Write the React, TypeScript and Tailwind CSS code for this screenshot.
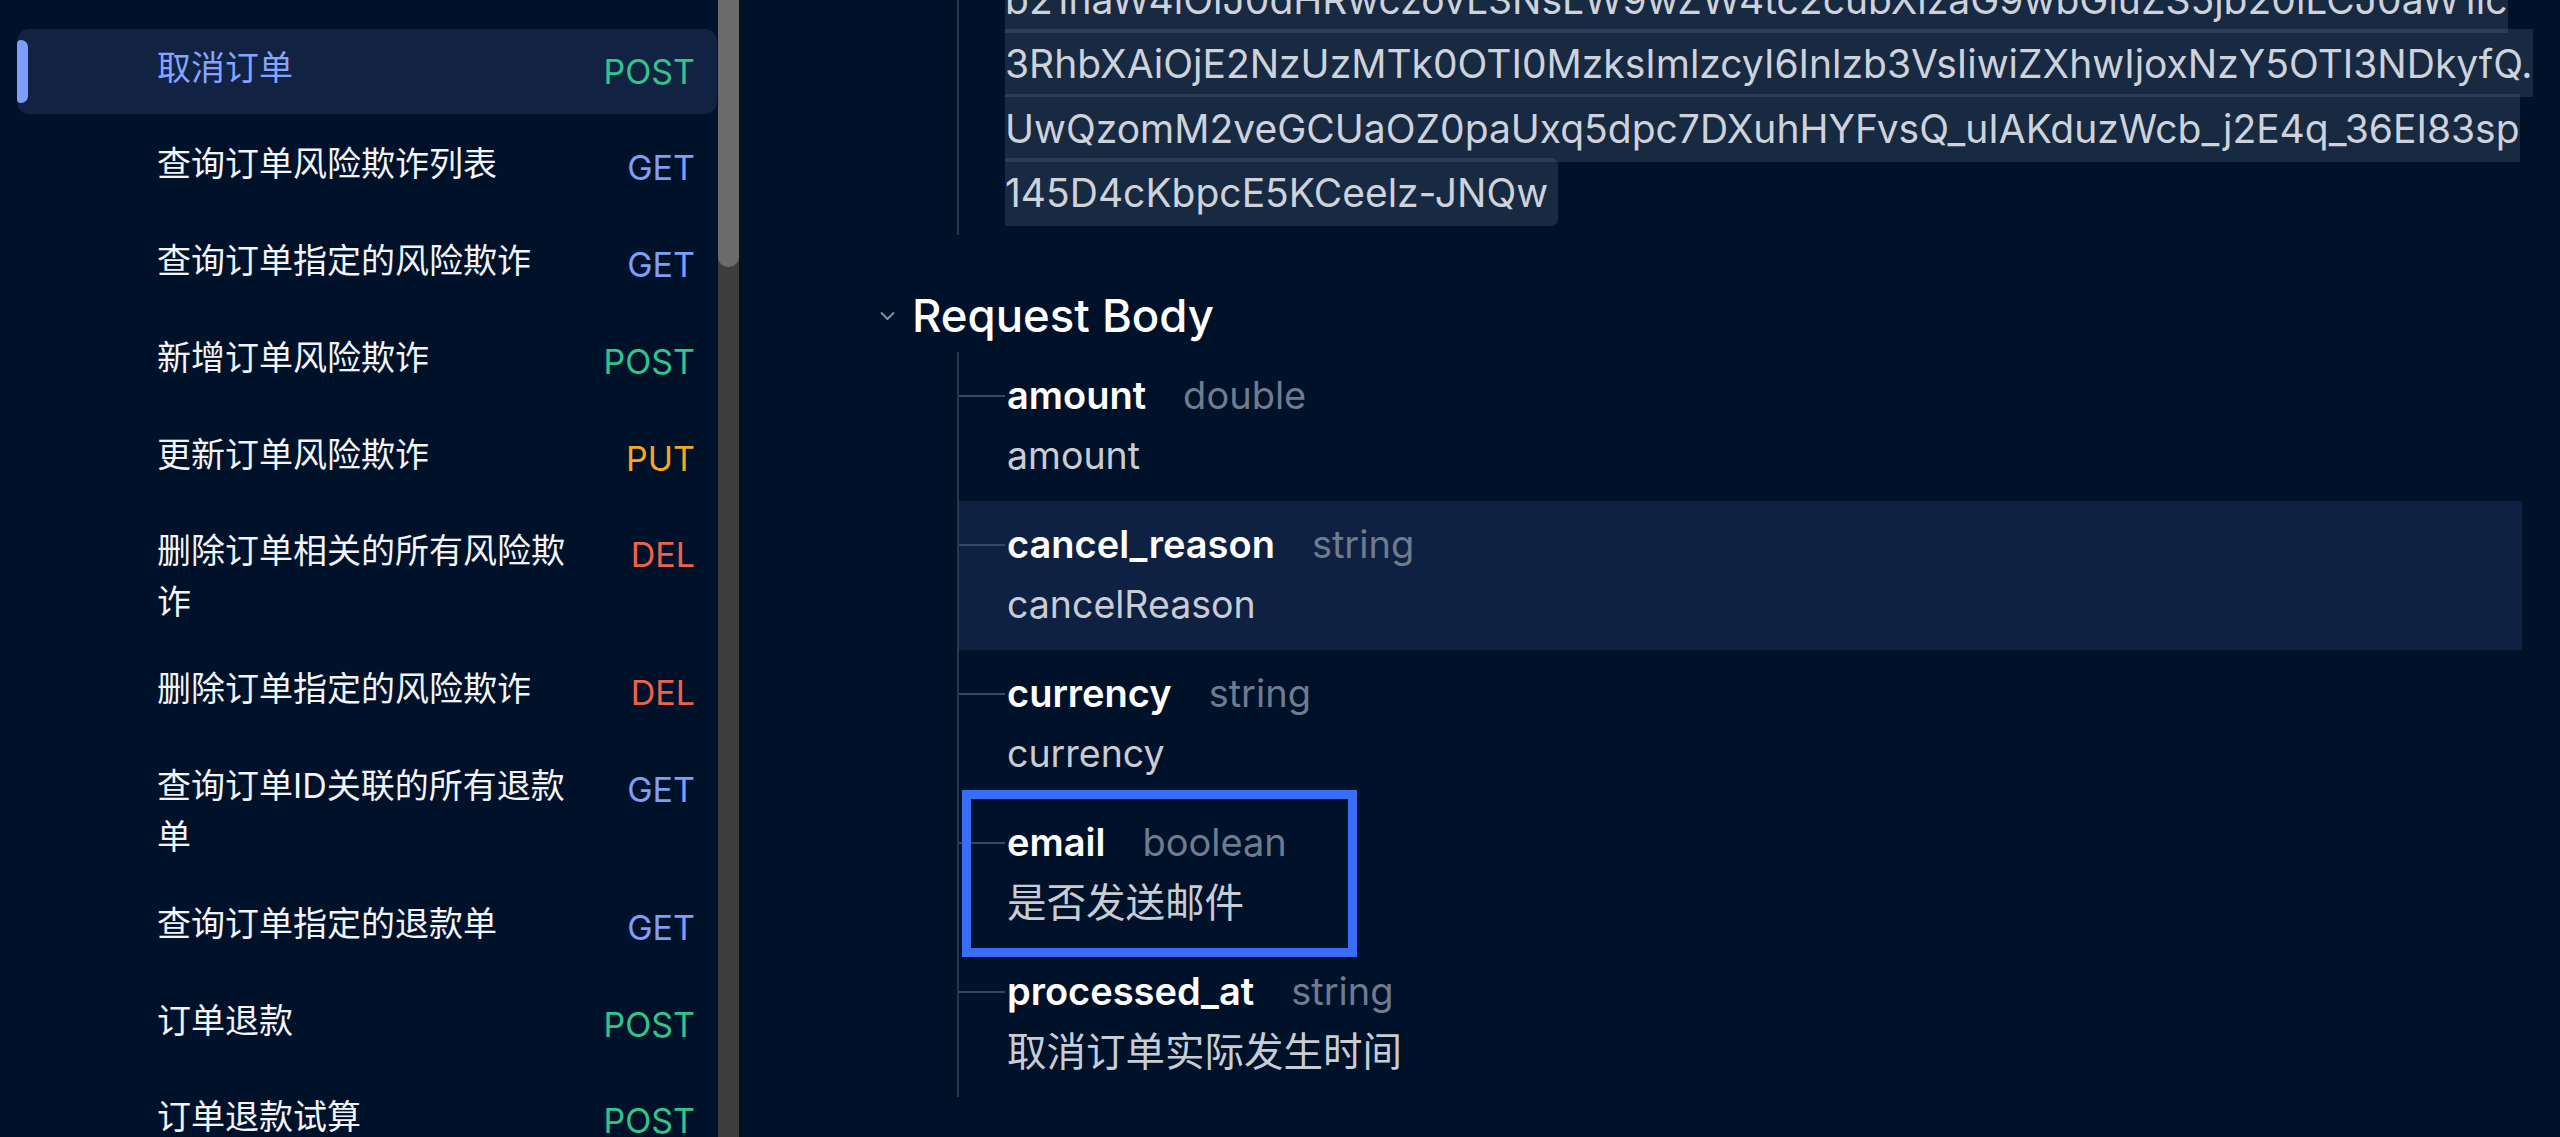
import React from 'react';

type Method = 'POST' | 'GET' | 'PUT' | 'DEL';

const items: { t: string; m: Method; active?: boolean }[] = [
  { t: '取消订单', m: 'POST', active: true },
  { t: '查询订单风险欺诈列表', m: 'GET' },
  { t: '查询订单指定的风险欺诈', m: 'GET' },
  { t: '新增订单风险欺诈', m: 'POST' },
  { t: '更新订单风险欺诈', m: 'PUT' },
  { t: '删除订单相关的所有风险欺诈', m: 'DEL' },
  { t: '删除订单指定的风险欺诈', m: 'DEL' },
  { t: '查询订单ID关联的所有退款单', m: 'GET' },
  { t: '查询订单指定的退款单', m: 'GET' },
  { t: '订单退款', m: 'POST' },
  { t: '订单退款试算', m: 'POST' },
];

const methodColor: Record<Method, string> = {
  POST: 'text-[#31c48d]',
  GET: 'text-[#7f9ef8]',
  PUT: 'text-[#f5a623]',
  DEL: 'text-[#f0614b]',
};

const tokenLines = [
  'b21haW4iOiJ0dHRwczovL3NsLW9wZW4tc2cubXlzaG9wbGluZS5jb20iLCJ0aW1lc',
  '3RhbXAiOjE2NzUzMTk0OTI0MzksImlzcyI6Inlzb3VsIiwiZXhwIjoxNzY5OTI3NDkyfQ.',
  'UwQzomM2veGCUaOZ0paUxq5dpc7DXuhHYFvsQ_uIAKduzWcb_j2E4q_36EI83sp',
  '145D4cKbpcE5KCeelz-JNQw',
];

const fields: { name: string; type: string; desc: string; cjk?: boolean; hl?: boolean; boxed?: boolean }[] = [
  { name: 'amount', type: 'double', desc: 'amount' },
  { name: 'cancel_reason', type: 'string', desc: 'cancelReason', hl: true },
  { name: 'currency', type: 'string', desc: 'currency' },
  { name: 'email', type: 'boolean', desc: '是否发送邮件', cjk: true, boxed: true },
  { name: 'processed_at', type: 'string', desc: '取消订单实际发生时间', cjk: true },
];

export default function App() {
  return (
    <div
      className="flex h-[1137px] w-[2560px] overflow-hidden bg-[#00112a] text-white"
      style={{ fontFamily: 'Inter, "Noto Sans CJK SC", sans-serif' }}
    >
      {/* Sidebar */}
      <aside className="flex w-[718px] shrink-0 flex-col gap-[11.8px] pl-[17px] pr-[1px] pt-[29px]">
        {items.map((it) => (
          <div
            key={it.t}
            className={`relative flex min-h-[85px] shrink-0 items-start rounded-[12px] pb-[11.5px] pt-[12.5px] ${
              it.active ? 'bg-[#112243]' : ''
            }`}
          >
            {it.active && (
              <div className="absolute left-0 top-[11px] h-[63px] w-[11px] rounded-l-[4px] rounded-r-[7px] bg-[#7f9dff]" />
            )}
            <div
              className={`ml-[140px] w-[425px] text-[34px] leading-[51px] ${
                it.active ? 'text-[#86a4ff]' : 'text-[#f2f4f7]'
              }`}
            >
              {it.t}
            </div>
            <div className={`ml-auto mr-[22px] mt-[4px] text-[34px] leading-[51px] ${methodColor[it.m]}`}>{it.m}</div>
          </div>
        ))}
      </aside>

      {/* Scrollbar */}
      <div className="w-[21px] shrink-0 bg-[#3d3d3d]">
        <div className="h-[267px] rounded-b-[10px] bg-[#6b6b6b]" />
      </div>

      {/* Main */}
      <main className="min-w-0 flex-1 pl-[141px] pr-[38px]">
        <div className="-mt-[33px]">
          {/* token block */}
          <div className="ml-[77px] border-l-2 border-[#2a364c] pb-[9.5px] pl-[46px]">
            {tokenLines.map((l, i) => (
              <div key={i} className="whitespace-nowrap text-[39px] leading-[64.5px] text-[#cdd2db]">
                <span
                  className={`bg-[rgba(160,180,210,0.15)] py-[10.5px] ${i === tokenLines.length - 1 ? 'rounded-r-[7px] pr-[10px]' : ''}`}
                >
                  {l}
                </span>
              </div>
            ))}
          </div>

          {/* Request Body header */}
          <div className="mt-[51px] flex h-[60px] items-center">
            <svg width="15" height="10" viewBox="0 0 15 10" className="shrink-0">
              <path d="M1.5 2 L7.5 8 L13.5 2" fill="none" stroke="#8a94a6" strokeWidth="1.8" strokeLinecap="round" strokeLinejoin="round" />
            </svg>
            <span className="ml-[17px] text-[45.5px] font-medium leading-[60px] text-white">Request Body</span>
          </div>

          {/* fields tree */}
          <div className="ml-[77px] mt-[6px] border-l-2 border-[#2a364c]">
            {fields.map((f) => (
              <div key={f.name} className={`relative h-[149px] pt-[14px] ${f.hl ? 'bg-[#0f2142]' : ''}`}>
                <div className="flex h-[60px] items-center">
                  <span className="h-[2px] w-[46px] shrink-0 bg-[#3a4660]" />
                  <span className="ml-[2px] text-[38px] font-semibold text-white">{f.name}</span>
                  <span className="ml-[37px] text-[38px] text-[#6f7b8e]">{f.type}</span>
                </div>
                <div className={`pl-[48px] leading-[60px] text-[#c8cdd5] ${f.cjk ? 'text-[39.5px]' : 'text-[37.5px]'}`}>
                  {f.desc}
                </div>
                {f.boxed && (
                  <div className="pointer-events-none absolute -bottom-[9px] -top-[9px] left-[3px] w-[395px] border-[9px] border-[#386ef6]" />
                )}
              </div>
            ))}
          </div>
        </div>
      </main>
    </div>
  );
}
